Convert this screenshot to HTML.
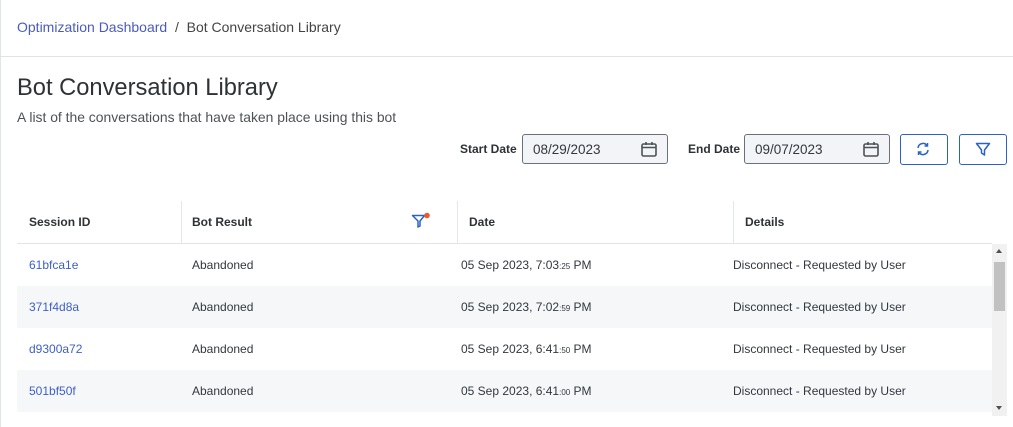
<!DOCTYPE html><html><head><style>
body{margin:0;width:1013px;height:427px;overflow:hidden;background:#fff;font-family:"Liberation Sans",sans-serif;color:#33383d;position:relative}
.a{position:absolute}
.bc{left:17px;top:19px;font-size:14px;color:#444}
.bc span.l{color:#4a5bbf}
.hr{left:0;top:56px;width:1013px;height:1px;background:#dfe2ea}
.lb{left:0;top:0;width:1px;height:427px;background:#e2e4ea}
h1{position:absolute;margin:0;left:17px;top:75px;font-size:23.7px;font-weight:normal;color:#2e3236}
.sub{left:17px;top:109px;font-size:13.9px;color:#4d5257}
.lab{font-size:12px;font-weight:bold;top:142px;color:#2e3236}
.inp{top:134px;height:30px;width:146px;border:1px solid #6b7078;border-radius:3px;background:#f3f4f7;box-sizing:border-box;font-size:13.5px;padding:7px 10px;color:#33383d}
.btn{top:134px;height:31px;width:48px;border:1px solid #2b62c5;border-radius:3px;box-sizing:border-box;background:#fff}
.th{top:201px;height:42px;font-size:12px;font-weight:bold;line-height:42px;color:#2e3236}
.sep{top:201px;width:1px;height:42px;background:#e4e6eb}
.row{left:17px;width:975px;height:42px}
.c{font-size:12px;line-height:42px}
.id{color:#3d5fc7}
small{font-size:8px}
</style></head><body>
<div class="a lb"></div>
<div class="a bc"><span class="l">Optimization Dashboard</span> &nbsp;/&nbsp; Bot Conversation Library</div>
<div class="a hr"></div>
<h1>Bot Conversation Library</h1>
<div class="a sub">A list of the conversations that have taken place using this bot</div>
<div class="a lab" style="left:460px">Start Date</div>
<div class="a inp" style="left:522px">08/29/2023</div>
<svg class="a" style="left:640px;top:140px" width="18" height="18" viewBox="0 0 18 18"><rect x="2" y="4" width="14" height="12" rx="1.5" fill="none" stroke="#4d5257" stroke-width="1.6"/><path d="M2 7.5h14M6 2v3M12 2v3" stroke="#4d5257" stroke-width="1.6"/></svg>
<div class="a lab" style="left:688px">End Date</div>
<div class="a inp" style="left:744px">09/07/2023</div>
<svg class="a" style="left:862px;top:140px" width="18" height="18" viewBox="0 0 18 18"><rect x="2" y="4" width="14" height="12" rx="1.5" fill="none" stroke="#4d5257" stroke-width="1.6"/><path d="M2 7.5h14M6 2v3M12 2v3" stroke="#4d5257" stroke-width="1.6"/></svg>
<div class="a btn" style="left:900px"></div>
<svg class="a" style="left:915px;top:141px" width="16" height="16" viewBox="0 0 16 16" fill="none" stroke="#2b62c5" stroke-width="1.5"><path d="M3 7a5 5 0 0 1 9-2.5M13 9a5 5 0 0 1-9 2.5"/><path d="M12.5 2v3h-3M3.5 14v-3h3"/></svg>
<div class="a btn" style="left:959px"></div>
<svg class="a" style="left:975px;top:142px" width="16" height="15" viewBox="0 0 16 15" fill="none" stroke="#2b62c5" stroke-width="1.5"><path d="M1.5 1.5h13L9.5 8v5l-3-2V8z" stroke-linejoin="round"/></svg>
<div class="a" style="left:17px;top:243px;width:975px;height:1px;background:#e2e4ea"></div>
<div class="a th" style="left:29px">Session ID</div>
<div class="a sep" style="left:181px"></div>
<div class="a th" style="left:192px">Bot Result</div>
<svg class="a" style="left:411px;top:212px" width="20" height="18" viewBox="0 0 20 18"><path d="M1.5 3.5h12L9 9v5l-2 1V9z" fill="none" stroke="#2b62c5" stroke-width="1.5" stroke-linejoin="round"/><circle cx="16" cy="3.5" r="2.8" fill="#f0572a"/></svg>
<div class="a sep" style="left:457px"></div>
<div class="a th" style="left:469px">Date</div>
<div class="a sep" style="left:733px"></div>
<div class="a th" style="left:745px">Details</div>

<div class="a row" style="top:244px"></div>
<div class="a row" style="top:286px;background:#f6f7f9"></div>
<div class="a row" style="top:328px"></div>
<div class="a row" style="top:370px;background:#f6f7f9"></div>

<div class="a c id" style="left:29px;top:244px">61bfca1e</div><div class="a c" style="left:192px;top:244px">Abandoned</div><div class="a c" style="left:461px;top:244px">05 Sep 2023, 7:03<small>:25</small> PM</div><div class="a c" style="left:733px;top:244px">Disconnect - Requested by User</div>
<div class="a c id" style="left:29px;top:286px">371f4d8a</div><div class="a c" style="left:192px;top:286px">Abandoned</div><div class="a c" style="left:461px;top:286px">05 Sep 2023, 7:02<small>:59</small> PM</div><div class="a c" style="left:733px;top:286px">Disconnect - Requested by User</div>
<div class="a c id" style="left:29px;top:328px">d9300a72</div><div class="a c" style="left:192px;top:328px">Abandoned</div><div class="a c" style="left:461px;top:328px">05 Sep 2023, 6:41<small>:50</small> PM</div><div class="a c" style="left:733px;top:328px">Disconnect - Requested by User</div>
<div class="a c id" style="left:29px;top:370px">501bf50f</div><div class="a c" style="left:192px;top:370px">Abandoned</div><div class="a c" style="left:461px;top:370px">05 Sep 2023, 6:41<small>:00</small> PM</div><div class="a c" style="left:733px;top:370px">Disconnect - Requested by User</div>

<div class="a" style="left:992px;top:244px;width:15px;height:172px;background:#f1f1f1"></div>
<div class="a" style="left:994px;top:262px;width:11px;height:49px;background:#c1c1c1"></div>
<div class="a" style="left:996px;top:249px;width:0;height:0;border:3.5px solid transparent;border-bottom:4px solid #505050;border-top:0"></div>
<div class="a" style="left:996px;top:406px;width:0;height:0;border:3.5px solid transparent;border-top:4px solid #505050;border-bottom:0"></div>
</body></html>
